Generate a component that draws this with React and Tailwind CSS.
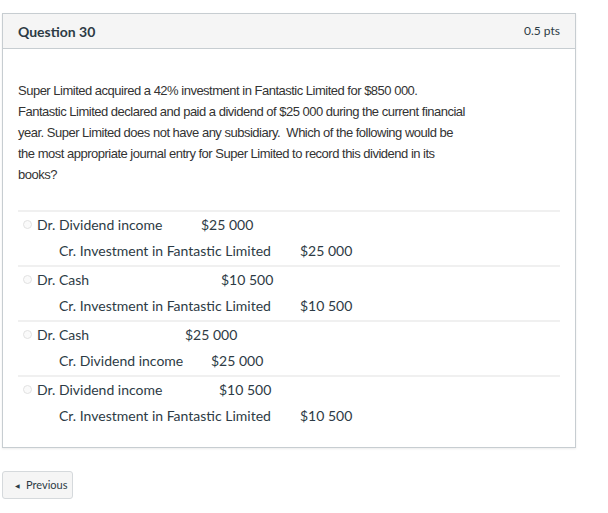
import React from "react";

const rows = [
  { dr: "Dr. Dividend income", drW: "w-[164px]", drAmt: "$25 000", cr: "Cr. Investment in Fantastic Limited", crW: "w-[241px]", crAmt: "$25 000" },
  { dr: "Dr. Cash", drW: "w-[184px]", drAmt: "$10 500", cr: "Cr. Investment in Fantastic Limited", crW: "w-[241px]", crAmt: "$10 500" },
  { dr: "Dr. Cash", drW: "w-[148px]", drAmt: "$25 000", cr: "Cr. Dividend income", crW: "w-[152px]", crAmt: "$25 000" },
  { dr: "Dr. Dividend income", drW: "w-[182px]", drAmt: "$10 500", cr: "Cr. Investment in Fantastic Limited", crW: "w-[241px]", crAmt: "$10 500" },
];

export default function App() {
  return (
    <div className="w-[608px] h-[513px] bg-white pt-[13px] text-[#2d3b45]" style={{ fontFamily: "Lato, 'Noto Sans', sans-serif" }}>
      <div className="ml-[2px] w-[574px] border border-[#c7cdd1] shadow-[0_1px_2px_rgba(0,0,0,0.08)]">
        <div className="h-[35px] bg-[#f5f5f5] border-b border-[#c7cdd1] flex items-center justify-between pl-[15px] pr-[15px]">
          <span className="font-bold text-[14px]">Question 30</span>
          <span className="text-[12px] text-[#2d3b45]">0.5 pts</span>
        </div>
        <div className="px-[15px] pt-[31px] pb-[17px]">
          <div className="w-[451px] text-[13px] leading-[21px] tracking-[-0.5px] text-[#333]" style={{ fontFamily: "'Liberation Sans', Arial, sans-serif" }}>
            Super Limited acquired a 42% investment in Fantastic Limited for $850 000.<br />
            Fantastic Limited declared and paid a dividend of $25 000 during the current financial year. Super Limited does not have any subsidiary.&nbsp; Which of the following would be the most appropriate journal entry for Super Limited to record this dividend in its books?
          </div>
          <div className="mt-[25px] w-[542px]">
            {rows.map((r, i) => (
              <div key={i} className="border-t-2 border-[#f0f0f0] h-[55px] pt-[1px] text-[14px]">
                <div className="h-[23px] flex items-center">
                  <span className="w-[9px] h-[9px] rounded-full border border-[#e2e2e2] bg-[#fafafa] ml-[5px] mr-[5px] shrink-0" />
                  <span className={`inline-block ${r.drW}`}>{r.dr}</span>
                  <span>{r.drAmt}</span>
                </div>
                <div className="h-[28px] flex items-center pl-[41px]">
                  <span className={`inline-block ${r.crW}`}>{r.cr}</span>
                  <span>{r.crAmt}</span>
                </div>
              </div>
            ))}
          </div>
        </div>
      </div>
      <div className="mt-[23px] ml-[2px]">
        <button className="h-[28px] w-[71px] bg-[#f5f5f5] border border-[#d5d9dc] rounded-[3px] flex items-center pl-[12px] text-[11px] text-[#2d3b45]">
          <span className="text-[6px] mr-[6px]">◀</span>
          <span>Previous</span>
        </button>
      </div>
    </div>
  );
}
